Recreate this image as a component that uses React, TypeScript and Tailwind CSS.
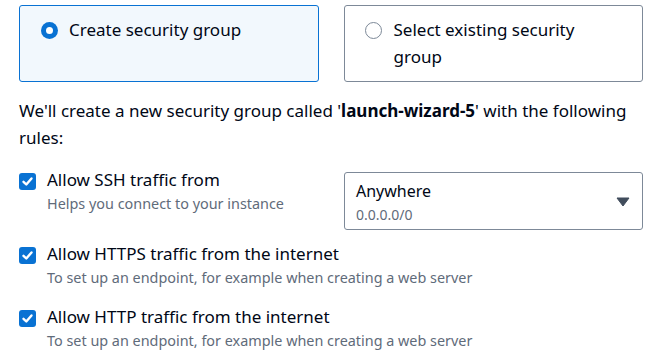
import React from "react";

const Check = () => (
  <span className="flex h-[17px] w-[17px] shrink-0 items-center justify-center rounded-[3px] bg-[#0972d3]">
    <svg width="13" height="13" viewBox="0 0 13 13" fill="none">
      <path d="M2.5 6.8 L5.3 9.5 L10.5 3.5" stroke="white" strokeWidth="2.4" strokeLinecap="round" strokeLinejoin="round" />
    </svg>
  </span>
);

const Rule = ({ title, sub }: { title: string; sub: string }) => (
  <div className="flex gap-[11px]">
    <div className="pt-[5px]"><Check /></div>
    <div>
      <div className="text-[17px] leading-[24px] text-[#000716]">{title}</div>
      <div className="text-[14.4px] leading-[24px] text-[#5f6b7a]">{sub}</div>
    </div>
  </div>
);

export default function App() {
  return (
    <div className="w-[657px] h-[360px] bg-white overflow-hidden" style={{ fontFamily: '"Noto Sans", "Open Sans", sans-serif' }}>
      <div className="flex gap-[25px] pl-[19px] pr-[14px] pt-[5px]">
        <div className="flex h-[77px] w-[300px] items-start gap-[11px] rounded-[3px] border border-[#0972d3] bg-[#f2f8fd] pl-[21px] pt-[10px]">
          <span className="mt-[6px] flex h-[17px] w-[17px] shrink-0 items-center justify-center rounded-full bg-[#0972d3]">
            <span className="h-[7px] w-[7px] rounded-full bg-white" />
          </span>
          <span className="text-[17px] leading-[27px] text-[#000716]">Create security group</span>
        </div>
        <div className="flex h-[77px] w-[300px] items-start gap-[12px] rounded-[3px] border border-[#7d8998] bg-white pl-[20px] pt-[10px]">
          <span className="mt-[6px] h-[17px] w-[17px] shrink-0 rounded-full border-[1.5px] border-[#7d8998]" />
          <span className="w-[200px] text-[17px] leading-[27px] text-[#000716]">Select existing security group</span>
        </div>
      </div>
      <p className="pl-[19px] pr-[20px] pt-[15px] text-[17px] leading-[27px] text-[#000716]">
        <span>We'll create a new security group called '</span><b>launch-wizard-5</b><span>' with the following</span>
        <br />
        <span>rules:</span>
      </p>
      <div className="flex flex-col pl-[19px] pt-[17px]">
        <div className="mb-[12px] flex items-start">
          <div className="w-[325px]">
            <Rule title="Allow SSH traffic from" sub="Helps you connect to your instance" />
          </div>
          <div className="mt-[4px] flex h-[58px] w-[299px] items-center justify-between rounded-[3px] border border-[#7d8998] pl-[11px] pr-[12px]">
            <div className="mt-[3px]">
              <div className="text-[16px] leading-[23px] text-[#000716]">Anywhere</div>
              <div className="text-[14px] leading-[23px] text-[#5f6b7a]">0.0.0.0/0</div>
            </div>
            <svg width="14" height="10" viewBox="0 0 14 10" className="mt-[1px]"><path d="M1 1 L13 1 L7 9 Z" fill="#414d5c" stroke="#414d5c" strokeLinejoin="round" /></svg>
          </div>
        </div>
        <div className="mb-[15px]">
          <Rule title="Allow HTTPS traffic from the internet" sub="To set up an endpoint, for example when creating a web server" />
        </div>
        <Rule title="Allow HTTP traffic from the internet" sub="To set up an endpoint, for example when creating a web server" />
      </div>
    </div>
  );
}
